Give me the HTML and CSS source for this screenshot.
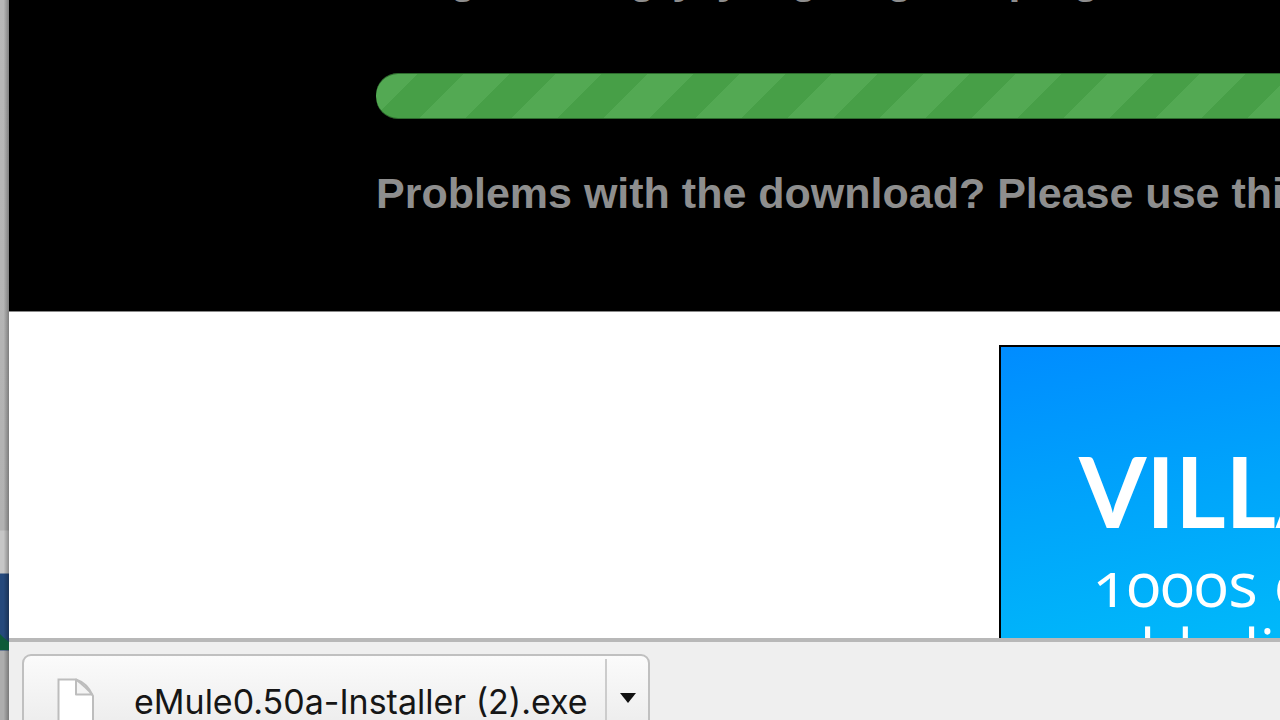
FILE: index.html
```html
<!DOCTYPE html>
<html lang="en">
<head>
<meta charset="utf-8">
<title>Download</title>
<link rel="stylesheet" href="styles.css">
</head>
<body>
<div class="desktop" aria-hidden="true">
  <svg class="desktop-hill" viewBox="0 0 9 16" preserveAspectRatio="none"><path d="M0 0 L4 4 L9 8 V16 H0 Z" fill="#0d5a38"/></svg>
</div>
<div class="browser">
  <main class="page">
    <section class="status">
      <p class="message">Imagine hungry, yang wag sleeping</p>
      <div class="progress" role="progressbar" aria-label="Download progress"></div>
      <p class="message">Problems with the download? Please use this link</p>
    </section>
    <section class="content">
      <div class="ad">
        <h2 class="ad-title">VILLAS</h2>
        <p class="ad-text">1000s of</p>
        <p class="ad-text ad-more">world alive</p>
      </div>
    </section>
  </main>
  <footer class="shelf">
    <div class="item">
      <button class="file" type="button">
        <svg class="file-icon" viewBox="0 0 38 48"><path d="M1.500 1.500 H19 Q30 5 36 18 V47 H1.500 Z" fill="#fff" stroke="#bdbdbd" stroke-width="2"/><path d="M19 1.500 V16.500 H35 Q30 10 19 1.500 Z" fill="#f4f4f4" stroke="#bdbdbd" stroke-width="2" stroke-linejoin="round"/></svg>
        <span class="file-name">eMule0.50a-Installer (2).exe</span>
      </button>
      <button class="menu" type="button" aria-label="Download options">
        <svg class="arrow" viewBox="0 0 16 10"><path d="M0 0 H16 L8 10 Z" fill="#111"/></svg>
      </button>
    </div>
  </footer>
</div>
</body>
</html>
```
FILE: styles.css
```css
* { box-sizing: border-box; }

body {
  margin: 0;
  height: 100vh;
  display: flex;
  overflow: hidden;
  background: #fff;
  font-family: "Liberation Sans", Arial, sans-serif;
}

h2, p { margin: 0; }

.desktop {
  flex: 0 0 9px;
  padding-top: 634px;
  background:
    linear-gradient(90deg, transparent 40%, rgba(0, 0, 0, 0.3)),
    linear-gradient(#b8b8b8 0, #b2b2b2 530px, #c6c6c6 531px, #c6c6c6 573px, #25497c 574px, #25497c 650px, #adadad 651px);
}

.desktop-hill {
  display: block;
  width: 100%;
  height: 16px;
}

.browser {
  flex: 1;
  min-width: 0;
  display: flex;
  flex-direction: column;
}

.page {
  flex: 1;
  min-height: 0;
  overflow: hidden;
}

.status {
  display: flow-root;
  padding: 0 0 94px 367px;
  background: #000;
  border-bottom: 1px solid #888;
}

.message {
  color: #8e8e8e;
  font-size: 43px;
  font-weight: bold;
  line-height: 48px;
  white-space: nowrap;
}

.message:first-child { margin-top: -46px; }

.progress {
  height: 46px;
  margin: 71px 0 50px;
  border-radius: 22px 0 0 22px;
  background: #479f47 linear-gradient(135deg, #53a953 25%, transparent 25%, transparent 50%, #53a953 50%, #53a953 75%, transparent 75%) -4px 0 / 92px 92px;
  box-shadow: inset 0 1px #2d6a2d, inset 0 -1px #2d6a2d;
}

.content {
  padding: 33px 0 0 990px;
}

.ad {
  height: 400px;
  padding: 84px 0 0 28px;
  overflow: hidden;
  border: 2px solid #000;
  border-right: 0;
  background: linear-gradient(170deg, #008cff, #00a5fb 40%, #00b8fa 75%);
  color: #fff;
  font-family: Lato, sans-serif;
  white-space: nowrap;
}

.ad-title {
  padding-left: 50px;
  font-size: 97px;
  font-weight: 700;
  line-height: 120px;
}

.ad-text {
  padding-left: 64px;
  font-family: "Open Sans", sans-serif;
  font-size: 62px;
  line-height: 64px;
  font-variant-numeric: oldstyle-nums;
}

.ad-more {
  padding-left: 0;
  line-height: 70px;
}

.shelf {
  flex: 0 0 82px;
  padding: 12px 13px 0;
  overflow: hidden;
  border-top: 4px solid #b8b8b8;
  background: #efefef;
}

.item {
  display: flex;
  width: 628px;
  height: 96px;
  border: 2px solid #c0c0c0;
  border-radius: 9px;
  background: linear-gradient(#fbfbfb, #e8e8e8);
}

.file, .menu {
  margin: 0;
  border: 0;
  background: none;
}

.file {
  flex: 1;
  display: flex;
  align-items: center;
  gap: 39px;
  padding: 0 0 0 33px;
  text-align: left;
}

.file-icon {
  flex: none;
  width: 38px;
  height: 48px;
}

.file-name {
  color: #161616;
  font-family: Inter, sans-serif;
  font-size: 34px;
  line-height: 40px;
  white-space: nowrap;
}

.menu {
  flex: 0 0 43px;
  padding: 34px 0 0 13px;
  margin-top: 3px;
  border-left: 2px solid #ccc;
  display: flex;
  align-items: flex-start;
}

.arrow {
  width: 16px;
  height: 10px;
}
```
